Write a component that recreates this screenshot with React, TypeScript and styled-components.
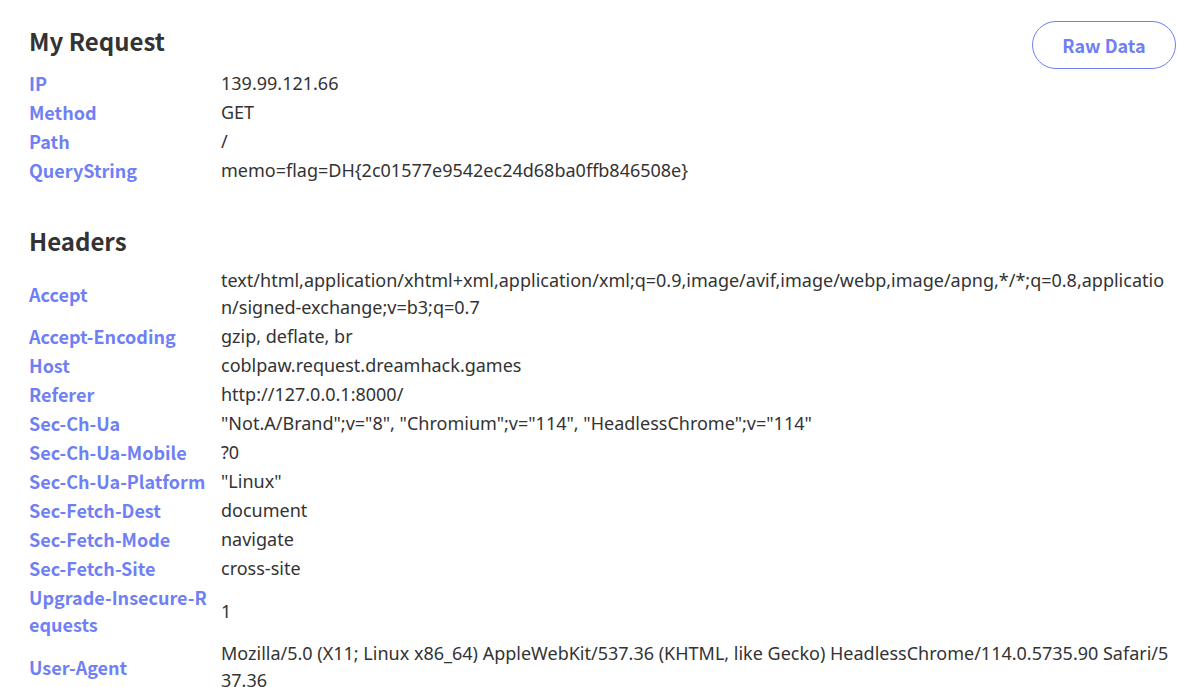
import React from "react";
import styled, { createGlobalStyle } from "styled-components";

const GlobalStyle = createGlobalStyle`
  html, body {
    margin: 0;
    padding: 0;
    background: #fff;
  }

  body {
    font-family: "Noto Sans CJK KR", "Noto Sans", sans-serif;
    color: #333;
    overflow: hidden;
  }
`;

const Page = styled.div`
  padding: 21px 1px 0 29px;
`;

const HeaderRow = styled.div`
  display: flex;
  justify-content: space-between;
  align-items: flex-start;
  height: 48px;
`;

const Title = styled.h2<{ $gap?: number }>`
  margin: ${(p) => p.$gap ?? 2}px 0 0;
  font-size: 24px;
  font-weight: 700;
  line-height: normal;
  color: #333;
`;

const RawButton = styled.button`
  height: 48px;
  width: 144px;
  border: 1px solid #6f7ff5;
  border-radius: 24px;
  background: #fff;
  color: #6f7ff5;
  font-family: inherit;
  font-size: 18px;
  font-weight: 700;
  cursor: pointer;
`;

const Table = styled.table<{ $top?: number }>`
  width: 100%;
  border-collapse: collapse;
  table-layout: fixed;
  margin-top: ${(p) => p.$top ?? 0}px;
`;

const KeyCell = styled.td`
  width: 186px;
  padding: 1px 6px 1px 0;
  vertical-align: middle;
  font-size: 18px;
  line-height: 27px;
  font-weight: 700;
  color: #6f7ff5;
  word-break: break-all;
`;

const ValueCell = styled.td`
  padding: 1px 0;
  vertical-align: middle;
  font-family: "Noto Sans", "Noto Sans CJK KR", sans-serif;
  font-size: 18px;
  line-height: 27px;
  color: #333;
  word-break: break-all;
`;

type Row = [string, string];

const request: Row[] = [
  ["IP", "139.99.121.66"],
  ["Method", "GET"],
  ["Path", "/"],
  ["QueryString", "memo=flag=DH{2c01577e9542ec24d68ba0ffb846508e}"],
];

const headers: Row[] = [
  [
    "Accept",
    "text/html,application/xhtml+xml,application/xml;q=0.9,image/avif,image/webp,image/apng,*/*;q=0.8,application/signed-exchange;v=b3;q=0.7",
  ],
  ["Accept-Encoding", "gzip, deflate, br"],
  ["Host", "coblpaw.request.dreamhack.games"],
  ["Referer", "http://127.0.0.1:8000/"],
  ["Sec-Ch-Ua", '"Not.A/Brand";v="8", "Chromium";v="114", "HeadlessChrome";v="114"'],
  ["Sec-Ch-Ua-Mobile", "?0"],
  ["Sec-Ch-Ua-Platform", '"Linux"'],
  ["Sec-Fetch-Dest", "document"],
  ["Sec-Fetch-Mode", "navigate"],
  ["Sec-Fetch-Site", "cross-site"],
  ["Upgrade-Insecure-Requests", "1"],
  [
    "User-Agent",
    "Mozilla/5.0 (X11; Linux x86_64) AppleWebKit/537.36 (KHTML, like Gecko) HeadlessChrome/114.0.5735.90 Safari/537.36",
  ],
];

const DataTable: React.FC<{ rows: Row[]; top?: number }> = ({ rows, top }) => (
  <Table $top={top}>
    <tbody>
      {rows.map(([k, v]) => (
        <tr key={k}>
          <KeyCell>{k}</KeyCell>
          <ValueCell>{v}</ValueCell>
        </tr>
      ))}
    </tbody>
  </Table>
);

const App: React.FC = () => {
  return (
    <>
      <GlobalStyle />
      <Page>
        <HeaderRow>
          <Title>My Request</Title>
          <RawButton>Raw Data</RawButton>
        </HeaderRow>
        <DataTable rows={request} />
        <Title $gap={38}>Headers</Title>
        <DataTable rows={headers} top={8} />
      </Page>
    </>
  );
};

export default App;
